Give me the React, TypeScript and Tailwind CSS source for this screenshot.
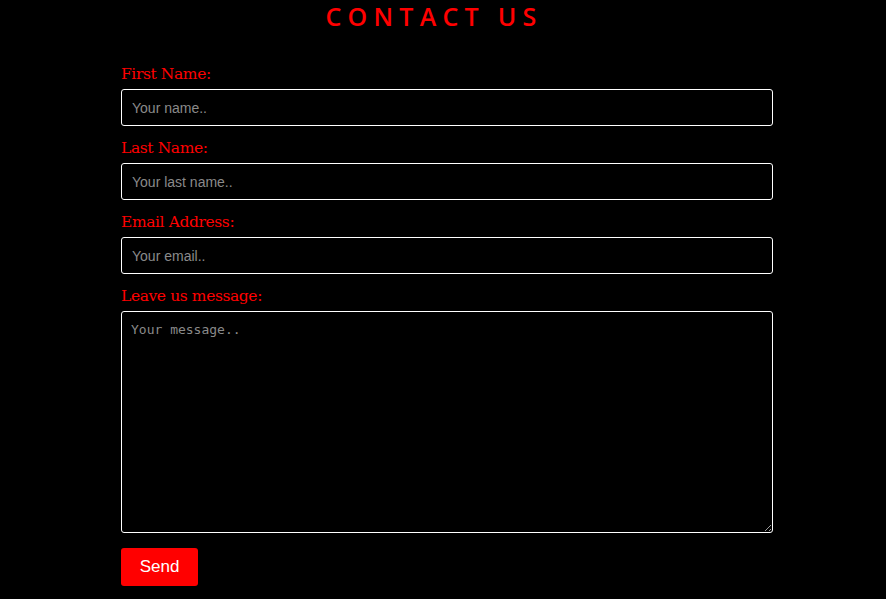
import React from "react";

interface FieldProps {
  label: string;
  placeholder: string;
}

const Field: React.FC<FieldProps> = ({ label, placeholder }: FieldProps) => {
  return (
    <div className="flex flex-col">
      <label className="h-[24px] leading-[24px] text-[15.5px] text-[#ff0000] font-['DejaVu_Serif','Liberation_Serif',serif] tracking-[-0.4px]">
        {label}
      </label>
      <input
        type="text"
        placeholder={placeholder}
        className="mt-[3px] h-[37px] w-full rounded-[3px] border border-white bg-black px-[10px] text-[14px] text-white font-['Liberation_Sans',Arial,sans-serif] placeholder:text-[#8a8a8a] outline-none"
      />
    </div>
  );
};

const App: React.FC = () => {
  return (
    <div className="min-h-[599px] w-full bg-black">
      <h1 className="text-center text-[25px] leading-[32px] font-semibold tracking-[0.25em] text-[#ff0000] font-['Open_Sans',sans-serif] pr-[18px]">
        CONTACT US
      </h1>
      <form className="ml-[121px] mt-[30px] flex w-[652px] flex-col gap-[10px]">
        <Field label="First Name:" placeholder="Your name.." />
        <Field label="Last Name:" placeholder="Your last name.." />
        <Field label="Email Address:" placeholder="Your email.." />
        <div className="flex flex-col">
          <label className="h-[24px] leading-[24px] text-[15.5px] text-[#ff0000] font-['DejaVu_Serif','Liberation_Serif',serif] tracking-[-0.4px]">
            Leave us message:
          </label>
          <textarea
            placeholder="Your message.."
            className="mt-[3px] h-[222px] w-full rounded-[3px] border border-white bg-black px-[9px] py-[8px] text-[13px] text-white font-['DejaVu_Sans_Mono','Liberation_Mono',monospace] placeholder:text-[#8a8a8a] outline-none"
          />
        </div>
        <div className="mt-[5px]">
          <button
            type="button"
            className="h-[38px] w-[77px] rounded-[3px] bg-[#ff0000] text-[17px] text-white font-['Liberation_Sans',Arial,sans-serif]"
          >
            Send
          </button>
        </div>
      </form>
    </div>
  );
};

export default App;
